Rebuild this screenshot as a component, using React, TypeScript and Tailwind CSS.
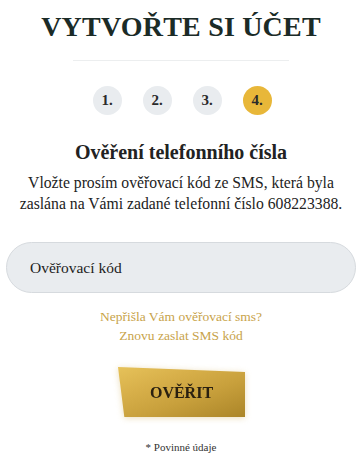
import React from "react";

export default function App() {
  const serif = { fontFamily: '"Liberation Serif", "DejaVu Serif", serif' };
  return (
    <div className="w-[362px] h-[459px] bg-white overflow-hidden flex flex-col items-center text-[#222]" style={serif}>
      <h1 className="mt-[8px] text-[28px] leading-[38px] font-bold text-[#1b2b27] tracking-[0.2px]">VYTVOŘTE SI ÚČET</h1>
      <div className="mt-[14px] w-[216px] h-px bg-[#eceeef]" />
      <div className="mt-[25px] flex gap-[21px] ml-[2px]">
        {["1.", "2.", "3.", "4."].map((s, i) => (
          <div
            key={s}
            className={
              i === 3
                ? "w-[29px] h-[29px] rounded-full bg-[#e8b739] flex items-center justify-center text-[15px] font-bold text-[#2a2a2a]"
                : "w-[29px] h-[29px] rounded-full bg-[#e9ecef] flex items-center justify-center text-[15px] font-bold text-[#2a2a2a]"
            }
          >
            {s}
          </div>
        ))}
      </div>
      <h2 className="mt-[25px] text-[20px] leading-[24px] font-bold text-[#222]">Ověření telefonního čísla</h2>
      <p className="mt-[8px] text-[15.7px] leading-[21px] text-center text-[#222]">
        Vložte prosím ověřovací kód ze SMS, která byla
        <br />
        zaslána na Vámi zadané telefonní číslo 608223388.
      </p>
      <div className="mt-[28px] w-[350px] h-[51px] rounded-full bg-[#e9ecef] border border-[#d6dade] flex items-center pl-[23px] text-[15.5px] text-[#222]">
        Ověřovací kód
      </div>
      <div className="mt-[14px] text-[13.5px] leading-[19px] text-center text-[#c8a34a]">
        Nepřišla Vám ověřovací sms?
        <br />
        Znovu zaslat SMS kód
      </div>
      <div className="mt-[22px] ml-[1px] relative w-[127px] h-[50px] drop-shadow-[0_1px_3px_rgba(200,160,60,0.35)]">
        <div className="absolute inset-0 [clip-path:polygon(0_0,100%_10%,100%_100%,5%_100%)] bg-[linear-gradient(160deg,#e6c25a_0%,#d8b04a_30%,#c8a03c_60%,#ab8528_100%)]" />
        <div className="relative w-full h-full flex items-center justify-center pt-[2px] text-[16px] font-bold text-[#2a2010]">OVĚŘIT</div>
      </div>
      <div className="mt-[22px] text-[11px] text-[#333]">* Povinné údaje</div>
    </div>
  );
}
